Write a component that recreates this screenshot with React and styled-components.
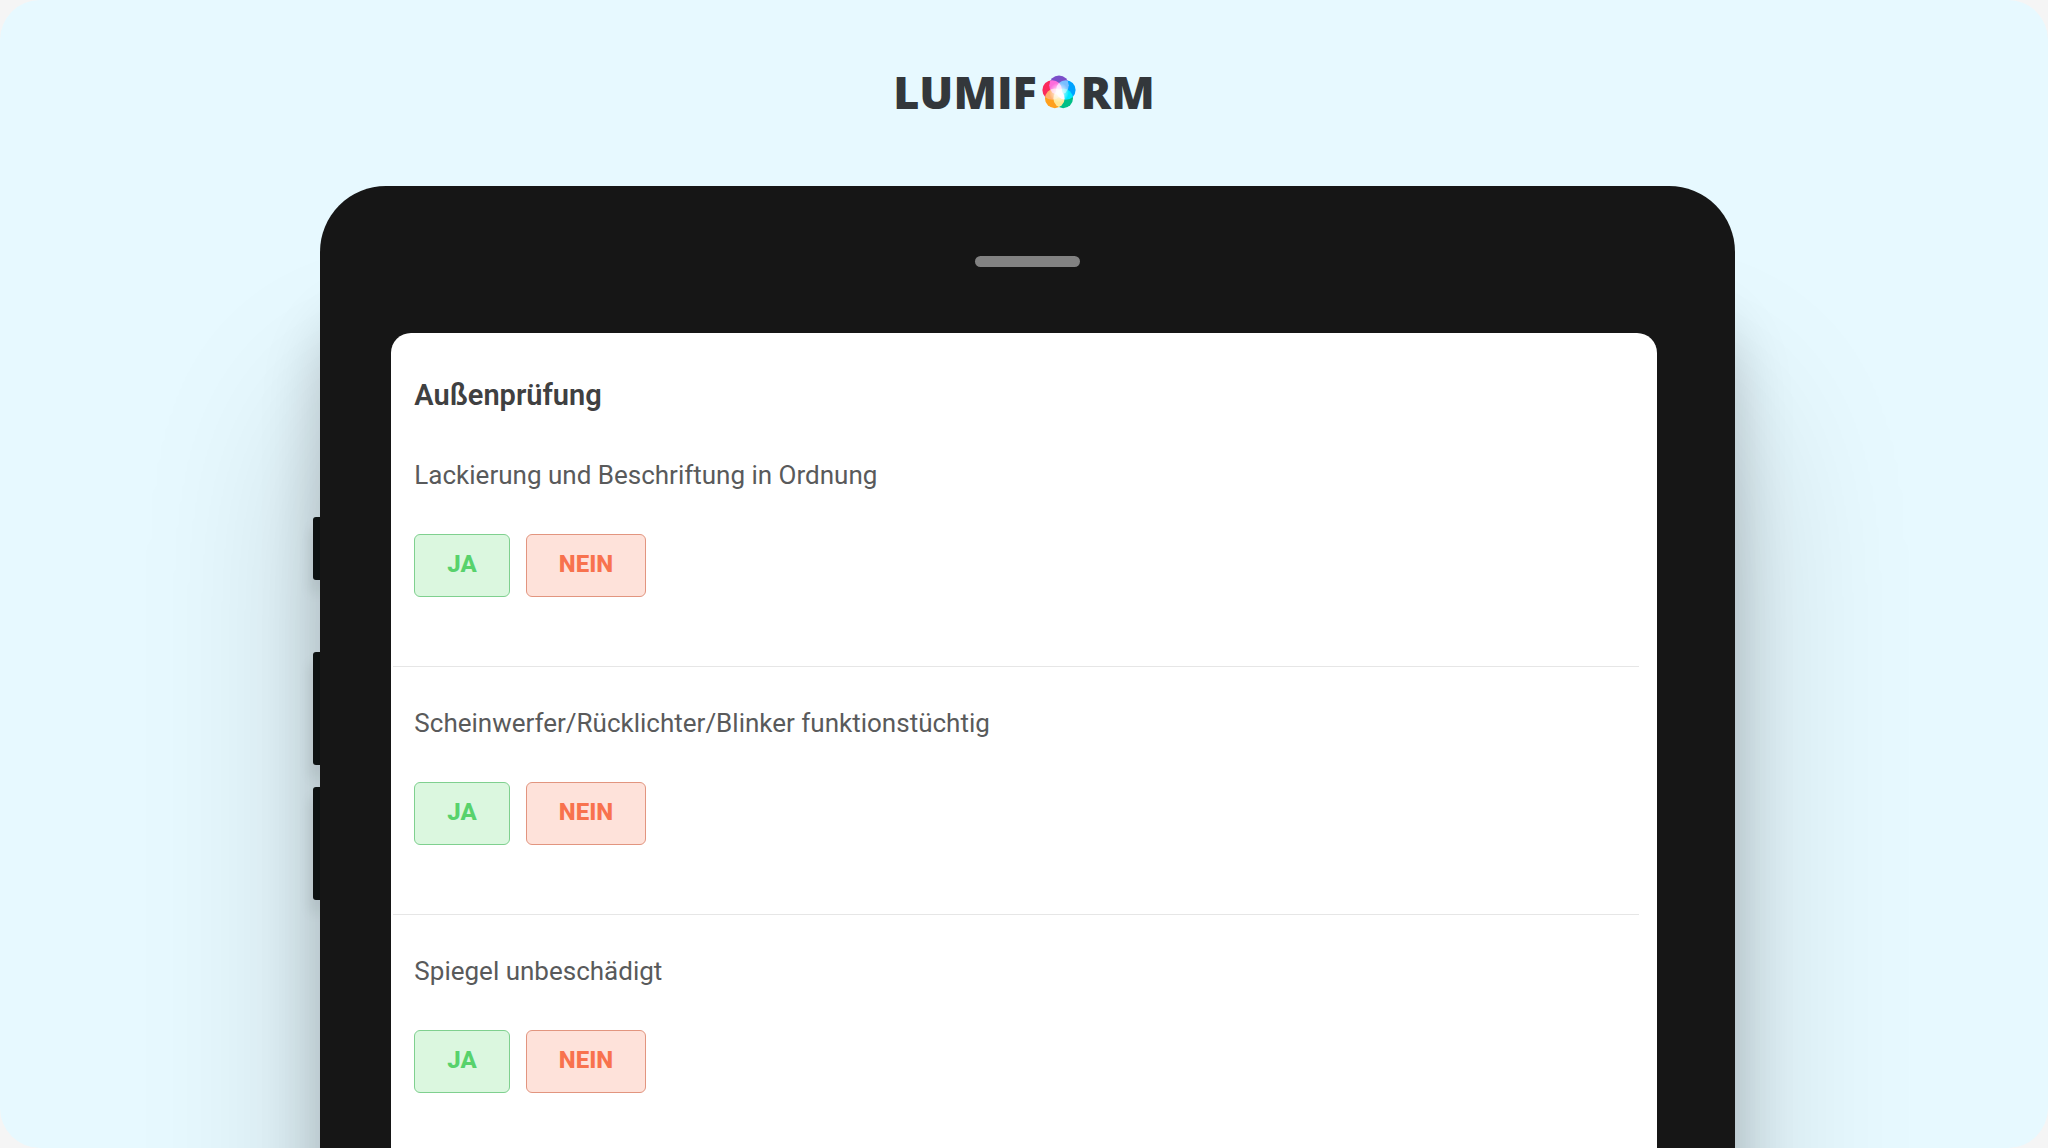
import React, { useState } from 'react';
import styled, { createGlobalStyle } from 'styled-components';

const questions = [
    { id: "paint", label: "Lackierung und Beschriftung in Ordnung" },
    { id: "lights", label: "Scheinwerfer/Rücklichter/Blinker funktionstüchtig" },
    { id: "mirror", label: "Spiegel unbeschädigt" },
];

const petals = [
    { cx: 17, cy: 10.2, color: "#7b4fc9" },
    { cx: 23.8, cy: 15, color: "#00a2ff" },
    { cx: 21.2, cy: 23.4, color: "#00bf86" },
    { cx: 12.8, cy: 23.4, color: "#ffa01c" },
    { cx: 10.2, cy: 15, color: "#fb2a5c" },
];

const Orb = () => (
    <OrbSvg viewBox="0 0 34 34" aria-hidden="true">
        <defs>
            <radialGradient id="glow">
                <stop offset="0" stopColor="white" />
                <stop offset="0.35" stopColor="white" stopOpacity="0.7" />
                <stop offset="1" stopColor="white" stopOpacity="0" />
            </radialGradient>
        </defs>
        {petals.map(({ cx, cy, color }) => (
            <circle key={color} cx={cx} cy={cy} r="9.8" fill={color} />
        ))}
        <circle cx="17" cy="17.5" r="10" fill="url(#glow)" />
    </OrbSvg>
);

const Question = ({ id, label }) => {
    const [answer, setAnswer] = useState(null);

    return (
        <QuestionRow role="group" aria-labelledby={id}>
            <QuestionText id={id}>{label}</QuestionText>
            <Answers>
                <AnswerButton type="button" tone="yes" aria-pressed={answer === "yes"} onClick={() => setAnswer("yes")}>JA</AnswerButton>
                <AnswerButton type="button" tone="no" aria-pressed={answer === "no"} onClick={() => setAnswer("no")}>NEIN</AnswerButton>
            </Answers>
        </QuestionRow>
    );
};

const App = () => {
    return (
        <Page>
            <GlobalStyle />

            <Header>
                <Logo>
                    <span>LUMIF</span>
                    <Orb />
                    <span>RM</span>
                </Logo>
            </Header>

            <Tablet>
                <SideKeys>
                    <SideKey size="63px" />
                    <SideKey size="113px" />
                    <SideKey size="113px" />
                </SideKeys>

                <TabletBody>
                    <Speaker />
                    <Screen>
                        <Title>Außenprüfung</Title>
                        {questions.map((question) => (
                            <Question key={question.id} {...question} />
                        ))}
                    </Screen>
                </TabletBody>
            </Tablet>
        </Page>
    );
};

export default App;

const GlobalStyle = createGlobalStyle`
    * {
        box-sizing: border-box;
    }

    body {
        margin: 0;
        background-color: #f5f5f5;
        font-family: Roboto, "Liberation Sans", sans-serif;
    }
`;

const Page = styled.div`
    display: flex;
    flex-direction: column;
    height: 100vh;
    overflow: hidden;
    border-radius: 40px;
    background-color: #e7f9ff;
`;

const Header = styled.header`
    display: flex;
    justify-content: center;
    padding: 70px 0 72px;
`;

const Logo = styled.div`
    display: flex;
    align-items: center;
    gap: 5px;
    color: #33373b;
    font-family: "Open Sans", sans-serif;
    font-size: 45px;
    font-weight: 800;
    line-height: 44px;
`;

const OrbSvg = styled.svg`
    width: 34px;
    height: 34px;
    isolation: isolate;

    circle {
        mix-blend-mode: screen;
    }
`;

const Tablet = styled.main`
    display: flex;
    flex: 1;
    width: 69.4%;
    margin: 0 auto;
`;

const SideKeys = styled.div`
    display: flex;
    flex-direction: column;
    gap: 22px;
    width: 7px;
    padding-top: 331px;
`;

const SideKey = styled.div`
    height: ${props => props.size};
    border-radius: 3px 0 0 3px;
    background-color: #101616;
    box-shadow: 0 12px 14px rgba(0, 0, 0, 0.15);

    &:first-child {
        margin-bottom: 50px;
    }
`;

const TabletBody = styled.div`
    display: flex;
    flex-direction: column;
    align-items: center;
    flex: 1;
    padding-top: 70px;
    border-radius: 66px 66px 0 0;
    background-color: #161616;
    box-shadow: 0 220px 180px rgba(0, 0, 0, 0.18), 0 130px 60px rgba(0, 0, 0, 0.2);
`;

const Speaker = styled.div`
    width: 105px;
    height: 11px;
    margin-bottom: 66px;
    border-radius: 6px;
    background-color: #828282;
`;

const Screen = styled.section`
    flex: 1;
    align-self: stretch;
    margin: 0 78px 0 71px;
    padding: 42px 18px 0 2px;
    border-radius: 20px 20px 0 0;
    background-color: white;
`;

const Title = styled.h1`
    margin: 0 0 4px;
    padding-left: 21px;
    color: #3f4041;
    font-size: 29px;
    font-weight: 600;
    line-height: 40px;
`;

const QuestionRow = styled.div`
    padding: 40px 0 69px 21px;
    border-bottom: 1px solid #e6e6e6;

    &:last-child {
        border-bottom: none;
    }
`;

const QuestionText = styled.p`
    margin: 0 0 43px;
    color: #595a5b;
    font-size: 26px;
    line-height: 32px;
`;

const Answers = styled.div`
    display: flex;
    gap: 16px;
`;

const AnswerButton = styled.button`
    height: 63px;
    padding: 0 32px 4px;
    border: 1px solid ${props => props.tone === "yes" ? "#7fd08f" : "#e2957f"};
    border-radius: 6px;
    background-color: ${props => props.tone === "yes" ? "#dbf7df" : "#fee2da"};
    color: ${props => props.tone === "yes" ? "#58d26c" : "#f8724e"};
    font-family: inherit;
    font-size: 24px;
    font-weight: 800;
    cursor: pointer;
`;
